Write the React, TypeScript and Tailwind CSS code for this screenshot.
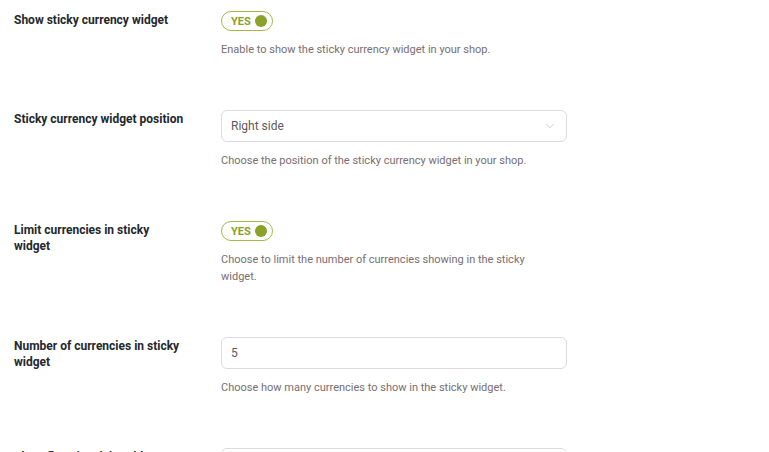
import { ChevronDown } from "lucide-react";

function Toggle() {
  return (
    <div className="flex h-[20px] w-[52px] items-center justify-between rounded-full border border-[#a4b84e] bg-white pl-[9px] pr-[5px]">
      <span className="text-[11px] font-bold leading-none text-[#8aa029]">YES</span>
      <span className="h-[12px] w-[12px] rounded-full bg-[#8ba12a]" />
    </div>
  );
}

function Row({ label, children, desc }: { label: string; children: React.ReactNode; desc?: string }) {
  return (
    <div className="flex">
      <div className="w-[185px] shrink-0 pl-[14px] pt-[1px] text-[12px] font-bold leading-[16px] text-[#23282d]">{label}</div>
      <div className="ml-[36px] flex flex-col">
        {children}
        {desc && <p className="mt-[10px] max-w-[320px] text-[11px] leading-[17px] text-[#776e71]">{desc}</p>}
      </div>
    </div>
  );
}

export default function App() {
  return (
    <div className="h-[452px] w-[769px] overflow-hidden bg-white font-['Roboto',sans-serif]">
      <div className="flex flex-col gap-[52px] pt-[11px]">
        <Row label="Show sticky currency widget" desc="Enable to show the sticky currency widget in your shop.">
          <Toggle />
        </Row>
        <Row label="Sticky currency widget position" desc="Choose the position of the sticky currency widget in your shop.">
          <div className="flex h-[32px] w-[346px] items-center justify-between rounded-[6px] border border-[#dcdcde] px-[9px] text-[12px] text-[#5f5a5c]">
            <span>Right side</span>
            <ChevronDown size={14} strokeWidth={1.2} className="text-[#b8b8b8]" />
          </div>
        </Row>
        <Row label="Limit currencies in sticky widget" desc="Choose to limit the number of currencies showing in the sticky widget.">
          <Toggle />
        </Row>
        <Row label="Number of currencies in sticky widget" desc="Choose how many currencies to show in the sticky widget.">
          <div className="flex h-[32px] w-[346px] items-center rounded-[6px] border border-[#dcdcde] px-[9px] text-[12px] text-[#5f5a5c]">
            5
          </div>
        </Row>
        <Row label="Show flags in sticky widget">
          <div className="h-[32px] w-[346px] rounded-[6px] border border-[#dcdcde]" />
        </Row>
      </div>
    </div>
  );
}
